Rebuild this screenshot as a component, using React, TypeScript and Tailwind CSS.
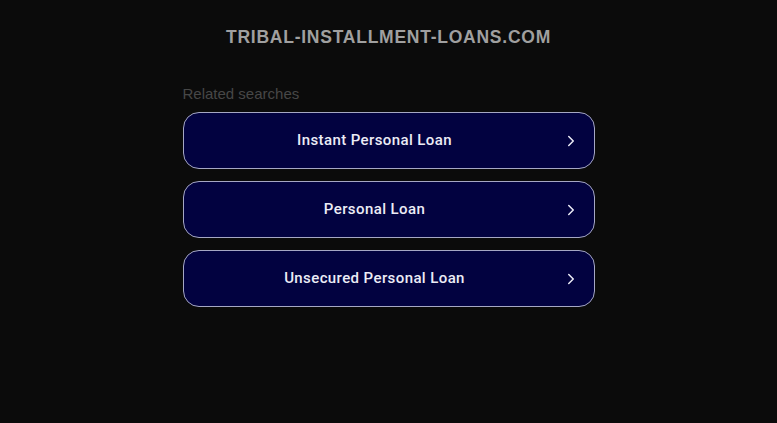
import { ChevronRight } from 'lucide-react';

const searches = ['Instant Personal Loan', 'Personal Loan', 'Unsecured Personal Loan'];

export default function App() {
  return (
    <div
      className="min-h-[423px] w-full bg-[#0b0b0b] flex flex-col items-center"
      style={{ fontFamily: '"Liberation Sans", Arial, sans-serif' }}
    >
      <h1 className="mt-[25px] text-[17.5px] leading-[24px] font-bold tracking-[0.75px] text-[#a0a0a0]">
        TRIBAL-INSTALLMENT-LOANS.COM
      </h1>

      <div className="mt-[36px] w-[412px] flex flex-col">
        <p className="text-[15px] leading-[18px] text-[#474747]">Related searches</p>
        <div className="mt-[9px] flex flex-col gap-[12px]">
          {searches.map((label) => (
            <a
              key={label}
              href="#"
              className="relative h-[57px] rounded-[16px] border border-[#a5a7c4] bg-[#020240] flex items-center"
            >
              <span
                className="flex-1 pr-[28px] text-center text-[15px] font-medium text-[#ececf6] tracking-[0.4px]"
                style={{ fontFamily: 'Roboto, "Liberation Sans", sans-serif' }}
              >
                {label}
              </span>
              <ChevronRight className="absolute right-[14px] w-[18px] h-[18px] text-[#ececf6]" strokeWidth={2} />
            </a>
          ))}
        </div>
      </div>
    </div>
  );
}
